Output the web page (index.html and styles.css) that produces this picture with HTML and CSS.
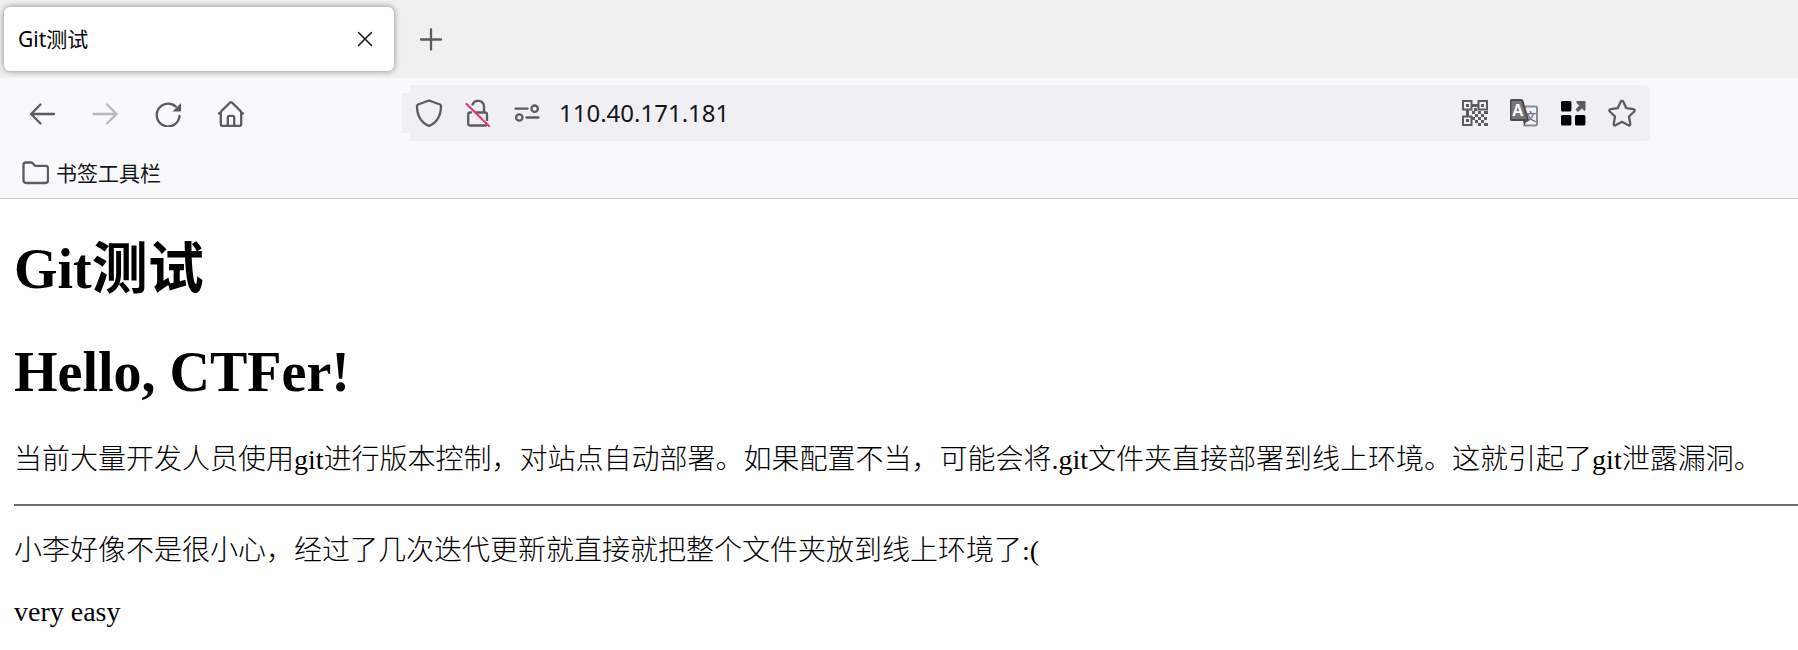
FILE: index.html
```
<!DOCTYPE html>
<html lang="zh-CN">

<head>
    <meta charset="UTF-8">
    <title>Git测试</title>
    <link rel="stylesheet" href="styles.css">
</head>

<body>
    <div class="tabs">
        <div class="tab">
            <span>Git测试</span>
            <button class="close" aria-label="Close tab">
                <svg class="icon" viewBox="0 0 28 28"><path d="M7.5 7.5l13 13M20.5 7.5l-13 13" /></svg>
            </button>
        </div>
        <button class="new-tab" aria-label="New tab">
            <svg class="icon" viewBox="0 0 28 28"><path d="M14 4.5v20M4 14.5h20" /></svg>
        </button>
    </div>

    <div class="toolbar">
        <button class="nav" aria-label="Back">
            <svg class="icon" viewBox="0 0 28 28"><path d="M12.5 5.5L3 15l9.5 9.5M3 15h23" /></svg>
        </button>
        <button class="nav" aria-label="Forward" disabled>
            <svg class="icon" viewBox="0 0 28 28"><path d="M16 5.5L25.5 15 16 24.500M25.5 15h-23" /></svg>
        </button>
        <button class="nav" aria-label="Reload">
            <svg class="icon" viewBox="0 0 28 28">
                <path d="M25.5 17A11.400 11.400 0 1 1 21.8 7.6" />
                <path class="solid" d="M27 4v7.700a.8.8 0 0 1-.8.8h-7.700z" />
            </svg>
        </button>
        <button class="nav" aria-label="Home">
            <svg class="icon" viewBox="0 0 28 28">
                <path d="M2 14.5L12.8 3.8a1.700 1.700 0 0 1 2.400 0L26 14.5M3.800 13v12a2 2 0 0 0 2 2h16.400a2 2 0 0 0 2-2V13" />
                <path d="M10.8 27v-8.500a1.700 1.700 0 0 1 1.700-1.700h3a1.700 1.700 0 0 1 1.700 1.700V27" />
            </svg>
        </button>

        <div class="urlbar">
            <button aria-label="Tracking protection">
                <svg class="icon" viewBox="0 0 28 28"><path d="M14 1.5L25 5.500a1.500 1.500 0 0 1 1 1.500C26 15 23 23 14 27 5 23 2 15 2 7a1.500 1.500 0 0 1 1-1.500z" /></svg>
            </button>
            <button aria-label="Connection not secure">
                <svg class="icon" viewBox="0 0 28 28">
                    <path d="M8.5 5.500a6 6 0 0 1 11.500 2V13M12 13.500h9a2 2 0 0 1 2 2V21M7 13.500h-.8a2 2 0 0 0-2 2V24.500a2 2 0 0 0 2 2H22" />
                    <path class="slash" d="M2.5 5L25 27" />
                </svg>
            </button>
            <button aria-label="Permissions">
                <svg class="icon" viewBox="0 0 28 28">
                    <path d="M2.5 9.700h12M13.5 18.500h12" />
                    <circle cx="21.7" cy="9.7" r="3.2" />
                    <circle cx="6.3" cy="18.5" r="3.2" />
                </svg>
            </button>
            <input type="text" value="110.40.171.181" aria-label="Address">
            <button aria-label="QR code">
                <svg class="icon qr" viewBox="0 0 26 26">
                    <path d="M1 1h8.500v8.500H1zM16.500 1H25v8.500h-8.500zM1 16.500h8.500V25H1z" />
                    <path class="solid" d="M4 4h3v3H4zM19 4h3v3h-3zM4 19h3v3H4zM10 4h6v3h-6zM4 10h3v6H4zM12 8h3v3h-3zM10 11h3v3h-3zM13 14h3v3h-3zM16 11h3v3h-3zM22 11h4v3h-4zM19 14h3v3h-3zM16 17h3v3h-3zM22 17h3v3h-3zM10 17h3v3h-3zM13 20h3v3h-3zM19 20h3v3h-3zM16 23h3v3h-3zM22 23h4v3h-4z" />
                </svg>
            </button>
            <button aria-label="Translate">
                <svg class="icon translate" viewBox="0 0 28 28">
                    <path class="page" d="M14 7.500h11.500a1.500 1.500 0 0 1 1.500 1.500v16a1.500 1.500 0 0 1-1.500 1.500h-11" />
                    <text class="han" x="15" y="22">文</text>
                    <path class="flap" d="M13 20.500h4.500L14 27z" />
                    <path class="front" d="M2 1h9a1.500 1.500 0 0 1 1.500 1L18 21H2A1.500 1.500 0 0 1 .5 19.500V2.500A1.500 1.500 0 0 1 2 1z" />
                    <text class="latin" x="2" y="17">A</text>
                </svg>
            </button>
            <button aria-label="Extensions">
                <svg class="icon" viewBox="0 0 28 28">
                    <g class="tiles">
                        <rect x="2" y="2" width="10.4" height="10.4" rx="1.5" />
                        <rect x="2" y="16" width="10.4" height="10.4" rx="1.5" />
                        <rect x="16" y="16" width="10.4" height="10.4" rx="1.5" />
                    </g>
                    <path class="solid" d="M17.5 2h8a1 1 0 0 1 1 1v8l-1.200 1-2.300-2.500-4 3.500-2.500-2.500 3.800-4-2.800-2.500z" />
                </svg>
            </button>
            <button aria-label="Bookmark this page">
                <svg class="icon" viewBox="0 0 28 28"><path d="M12.8 2.500a1.300 1.300 0 0 1 2.400 0l3.100 6.700 7.200 1a1.300 1.300 0 0 1 .7 2.300l-5.200 5 1.300 7.400a1.300 1.300 0 0 1-1.900 1.400L14 22.800l-6.400 3.500a1.300 1.300 0 0 1-1.900-1.400L7 17.500l-5.200-5a1.300 1.300 0 0 1 .7-2.300l7.200-1z" /></svg>
            </button>
        </div>
    </div>

    <div class="bookmarks">
        <a href="#">
            <svg class="icon" viewBox="0 0 28 28"><path d="M5 3.500h5a2 2 0 0 1 1.500.6l2.500 2.700h10.500a2.500 2.500 0 0 1 2.500 2.500v12.200a2.500 2.500 0 0 1-2.500 2.500H5a2.500 2.500 0 0 1-2.500-2.500V6A2.500 2.500 0 0 1 5 3.500z" /></svg>
            书签工具栏
        </a>
    </div>

    <div class="page-content">
        <h1>Git测试</h1>
        <h1>Hello, CTFer!</h1>
        <p>当前大量开发人员使用git进行版本控制，对站点自动部署。如果配置不当，可能会将.git文件夹直接部署到线上环境。这就引起了git泄露漏洞。</p>
        <hr>
        <p>小李好像不是很小心，经过了几次迭代更新就直接就把整个文件夹放到线上环境了:(</p>
        <p>very easy</p>
    </div>
</body>

</html>
```
FILE: styles.css
```
body {
    margin: 0;
    background-color: #fff;
    color: #000;
    font-family: "Noto Sans", "Noto Sans CJK SC", sans-serif;
}

button {
    flex: none;
    display: flex;
    align-items: center;
    justify-content: center;
    padding: 0;
    border: none;
    background: none;
}

/* icons */
.icon {
    flex: none;
    width: 28px;
    height: 28px;
    fill: none;
    stroke: #5b5b62;
    stroke-width: 2.3;
    stroke-linecap: round;
    stroke-linejoin: round;
}

.solid {
    fill: #5b5b62;
    stroke: none;
}

.slash {
    stroke: #e2416b;
}

.tiles {
    fill: #000;
    stroke: none;
}

.qr {
    width: 26px;
    height: 26px;
    stroke-width: 2;
    stroke-linejoin: miter;
}

.translate {
    stroke-width: 2;
}

.translate text {
    stroke: none;
    font-weight: bold;
}

.page {
    stroke: #8a8a90;
}

.front {
    fill: #77777b;
    stroke: #4a4a50;
}

.flap {
    fill: #4a4a50;
    stroke: none;
}

.latin {
    fill: #fff;
    font-size: 16px;
}

.han {
    fill: #77777b;
    font-size: 11px;
}

/* tab strip */
.tabs {
    display: flex;
    align-items: center;
    height: 78px;
    padding-left: 4px;
    background-color: #f0f0f0;
}

.tab {
    display: flex;
    align-items: center;
    justify-content: space-between;
    box-sizing: border-box;
    width: 390px;
    height: 64px;
    padding: 0 15px 0 14px;
    border-radius: 6px;
    background-color: #fff;
    box-shadow: 0 0 6px rgba(0, 0, 0, 0.45);
    font-size: 21px;
    line-height: 28px;
}

.close .icon {
    stroke: #15141a;
    stroke-width: 1.5;
}

.new-tab {
    margin-left: 23px;
}

/* navigation */
.toolbar {
    display: flex;
    align-items: center;
    height: 70px;
    padding: 0 148px 0 10px;
    background-color: #f9f9fb;
}

.nav {
    width: 63px;
    height: 56px;
}

.nav:disabled {
    opacity: 0.4;
}

.urlbar {
    position: relative;
    flex: 1;
    display: flex;
    align-items: center;
    gap: 21px;
    height: 56px;
    margin-left: 148px;
    padding: 0 14px 0 5px;
    border-radius: 0 6px 6px 0;
    background-color: #f0f0f4;
}

.urlbar::before {
    content: "";
    position: absolute;
    left: -8px;
    top: 8px;
    width: 8px;
    height: 40px;
    background-color: #f0f0f4;
}

.urlbar button {
    width: 28px;
}

.urlbar input {
    flex: 1;
    min-width: 0;
    padding: 0 0 2px;
    margin-left: -3px;
    border: none;
    background: none;
    color: #15141a;
    font-family: inherit;
    font-size: 24px;
}

/* bookmarks */
.bookmarks {
    display: flex;
    align-items: center;
    height: 50px;
    padding-left: 21px;
    border-bottom: 1px solid #ccccd0;
    background-color: #f9f9fb;
}

.bookmarks a {
    display: flex;
    align-items: center;
    gap: 7px;
    color: #15141a;
    font-size: 21px;
    line-height: 28px;
    text-decoration: none;
}

/* page */
.page-content {
    margin-left: 14px;
    font-family: "Liberation Serif", "Noto Sans CJK SC", serif;
    font-size: 28px;
    line-height: 33px;
}

h1 {
    margin: 38px 0;
    font-size: 56px;
    line-height: 65px;
}

p {
    margin: 28px 0;
    font-weight: 300;
}

hr {
    height: 2px;
    margin: 28px 0;
    border: none;
    background-color: #6c6c6f;
}
```
